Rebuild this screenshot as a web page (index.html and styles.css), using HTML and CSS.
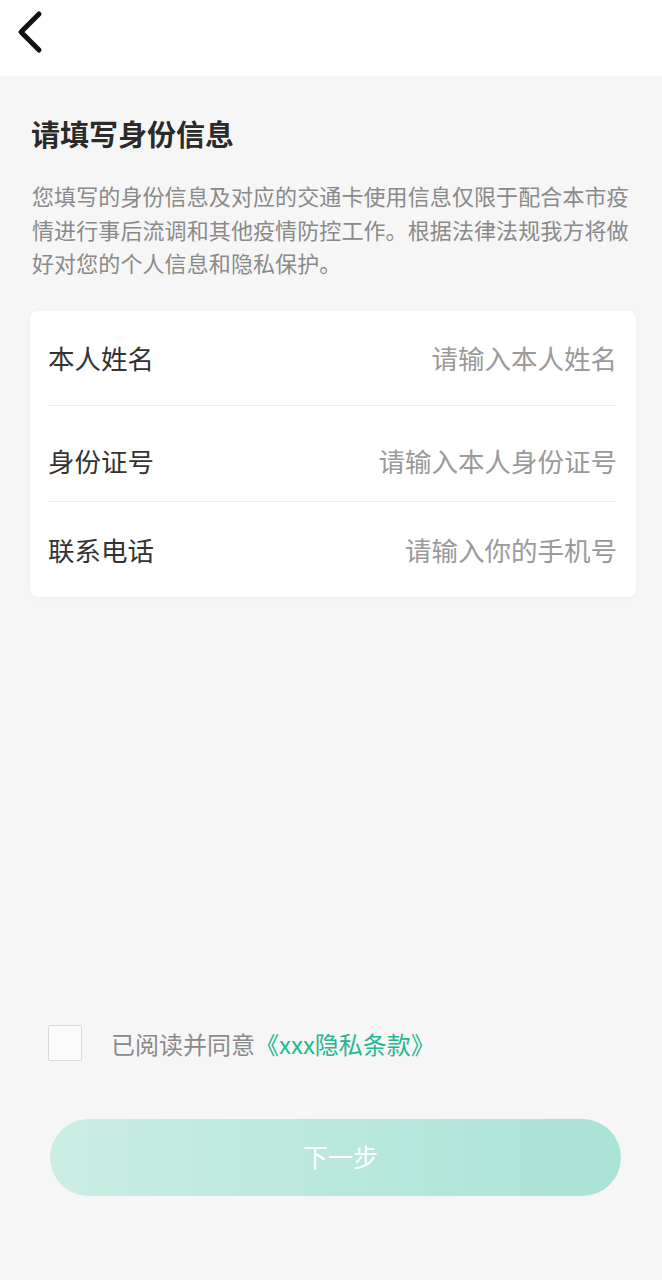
FILE: index.html
```html
<!DOCTYPE html>
<html lang="zh-CN">
<head>
  <meta charset="UTF-8">
  <meta name="viewport" content="width=device-width, initial-scale=1.0">
  <title>请填写身份信息</title>
  <link rel="stylesheet" href="styles.css">
</head>
<body>
  <div class="topbar">
    <svg class="back" width="40" height="50" viewBox="0 0 40 50">
      <path d="M31 6 L13 24 L31 42" fill="none" stroke="#111" stroke-width="5" stroke-linecap="round" stroke-linejoin="round"/>
    </svg>
  </div>

  <div class="page">
    <h1 class="title">请填写身份信息</h1>
    <p class="desc">您填写的身份信息及对应的交通卡使用信息仅限于配合本市疫情进行事后流调和其他疫情防控工作。根据法律法规我方将做好对您的个人信息和隐私保护。</p>

    <div class="card">
      <div class="row">
        <span class="label">本人姓名</span>
        <span class="placeholder">请输入本人姓名</span>
      </div>
      <div class="row row-low">
        <span class="label">身份证号</span>
        <span class="placeholder">请输入本人身份证号</span>
      </div>
      <div class="row">
        <span class="label">联系电话</span>
        <span class="placeholder">请输入你的手机号</span>
      </div>
    </div>

    <div class="agree">
      <span class="checkbox"></span>
      <span class="agree-text">已阅读并同意<a class="link">《xxx隐私条款》</a></span>
    </div>

    <button class="next">下一步</button>
  </div>
</body>
</html>
```

FILE: styles.css
```css
body {
  margin: 0;
  font-family: "Noto Sans CJK SC", "Noto Sans", sans-serif;
  background: #f6f6f6;
  min-height: 1280px;
}
.topbar {
  height: 76px;
  background: #fff;
  padding: 8px 0 0 8px;
  box-sizing: border-box;
}
.back {
  display: block;
}
.page {
  padding: 36px 0 0 0;
}
.title {
  margin: 0 0 0 31px;
  font-size: 29px;
  line-height: 42px;
  font-weight: 700;
  color: #2a2a2a;
}
.desc {
  margin: 25px 0 0 32px;
  width: 606px;
  font-size: 22px;
  line-height: 33.5px;
  color: #8a8a8a;
  letter-spacing: 0.1px;
}
.card {
  margin: 31px 0 0 30px;
  width: 606px;
  background: #fff;
  border-radius: 8px;
  padding: 0 19px 0 18px;
  box-sizing: border-box;
  box-shadow: 0 1px 6px rgba(0,0,0,0.03);
}
.row {
  height: 95.5px;
  display: flex;
  align-items: center;
  justify-content: space-between;
  border-bottom: 1px solid #ececec;
  font-size: 26.5px;
  box-sizing: border-box;
}
.row-low {
  padding-top: 14px;
}
.row:last-child {
  border-bottom: none;
}
.label {
  color: #333;
}
.placeholder {
  color: #9a9a9a;
}
.agree {
  margin: 428px 0 0 48px;
  display: flex;
  align-items: center;
  gap: 29px;
}
.checkbox {
  width: 32px;
  height: 34px;
  border: 1.5px solid #dadada;
  border-radius: 2px;
  background: #fafafa;
}
.agree-text {
  font-size: 24px;
  color: #8a8a8a;
}
.link {
  color: #24b891;
}
.next {
  display: block;
  margin: 58px 0 0 50px;
  width: 571px;
  height: 77px;
  border: none;
  border-radius: 39px;
  background: linear-gradient(90deg, #cbede4, #a9e3d6);
  color: #fff;
  font-family: inherit;
  font-size: 25px;
  padding: 0 0 4px 10px;
}
```
